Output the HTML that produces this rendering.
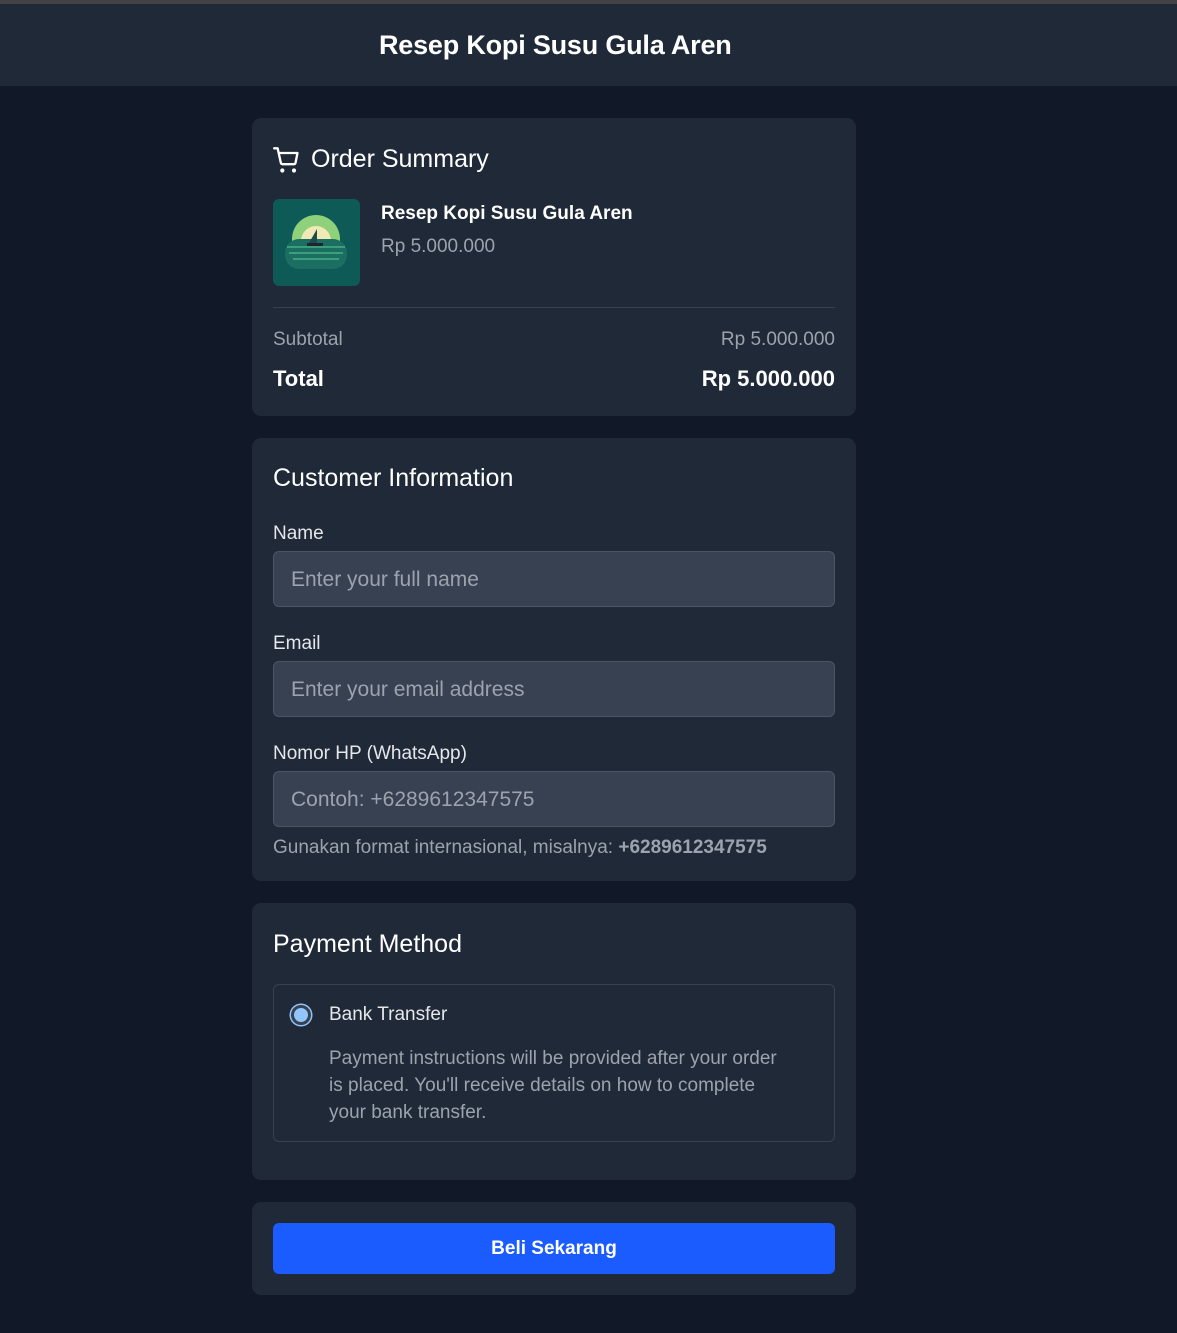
<!DOCTYPE html>
<html><head><meta charset="utf-8"><style>
*{box-sizing:border-box;margin:0;padding:0}
body{width:1177px;height:1333px;background:#111827;font-family:"Liberation Sans",Arial,sans-serif;color:#fff;position:relative;overflow:hidden}
.top{height:4px;background:#434343}
.hdr{height:82px;background:#1f2937;position:relative}
.hdr div{position:absolute;left:379px;top:26px;font-weight:bold;font-size:27px;letter-spacing:-0.2px}
.card{position:absolute;left:252px;width:604px;background:#1f2937;border-radius:9px}
.abs{position:absolute}
.lbl{position:absolute;left:21px;font-size:19px;color:#e5e7eb}
.inp{position:absolute;left:21px;width:562px;height:56px;background:#374151;border:1px solid #4b5563;border-radius:6px;font-size:21px;color:#9ca3af;padding-left:17px;line-height:56px}
</style></head><body>
<div class="top"></div>
<div class="hdr"><div>Resep Kopi Susu Gula Aren</div></div>

<div class="card" style="top:118px;height:298px">
 <svg class="abs" style="left:21px;top:28px" width="28" height="28" viewBox="0 0 24 24" fill="none" stroke="#fff" stroke-width="2" stroke-linecap="round" stroke-linejoin="round"><path d="M1 2h3l2.7 12.4a1.5 1.5 0 0 0 1.5 1.2h9.6a1.5 1.5 0 0 0 1.5-1.2L21 6H5.2"/><circle cx="8" cy="21" r="0.8" fill="#fff"/><circle cx="18" cy="21" r="0.8" fill="#fff"/></svg>
 <div class="abs" style="left:59px;top:27px;font-size:25px">Order Summary</div>
 <div class="abs" style="left:21px;top:81px;width:87px;height:87px;background:#0e5a57;border-radius:6px;overflow:hidden">
  <svg width="87" height="87" viewBox="0 0 87 87"><circle cx="43" cy="40" r="24" fill="#8fd07a"/><circle cx="43" cy="42" r="15" fill="#f0e9b5"/><rect x="12" y="40" width="62" height="30" rx="14" fill="#1c6e63"/><path d="M14 48h58M16 54h54M20 60h46" stroke="#39a07a" stroke-width="2"/><path d="M36 44l8-14v14z" fill="#1d4d4a"/><rect x="34" y="44" width="16" height="3" fill="#223"/></svg>
 </div>
 <div class="abs" style="left:129px;top:85px;font-size:19px;font-weight:bold">Resep Kopi Susu Gula Aren</div>
 <div class="abs" style="left:129px;top:118px;font-size:19px;color:#9ca3af">Rp 5.000.000</div>
 <div class="abs" style="left:21px;top:189px;width:562px;height:1px;background:#374151"></div>
 <div class="abs" style="left:21px;top:211px;font-size:19px;color:#9ca3af">Subtotal</div>
 <div class="abs" style="right:21px;top:211px;font-size:19px;color:#9ca3af">Rp 5.000.000</div>
 <div class="abs" style="left:21px;top:248px;font-size:22px;font-weight:bold">Total</div>
 <div class="abs" style="right:21px;top:248px;font-size:22px;font-weight:bold">Rp 5.000.000</div>
</div>

<div class="card" style="top:438px;height:443px">
 <div class="abs" style="left:21px;top:26px;font-size:25px">Customer Information</div>
 <div class="lbl" style="top:85px">Name</div>
 <div class="inp" style="top:113px">Enter your full name</div>
 <div class="lbl" style="top:195px">Email</div>
 <div class="inp" style="top:223px">Enter your email address</div>
 <div class="lbl" style="top:305px">Nomor HP (WhatsApp)</div>
 <div class="inp" style="top:333px">Contoh: +6289612347575</div>
 <div class="abs" style="left:21px;top:399px;font-size:19px;color:#9ca3af">Gunakan format internasional, misalnya: <b>+6289612347575</b></div>
</div>

<div class="card" style="top:903px;height:277px">
 <div class="abs" style="left:21px;top:27px;font-size:25px">Payment Method</div>
 <div class="abs" style="left:21px;top:81px;width:562px;height:158px;border:1px solid #374151;border-radius:6px">
  <div class="abs" style="left:17px;top:20px;width:20px;height:20px;border-radius:50%;background:#93c5fd;border:3px solid #374151;box-shadow:0 0 0 1.5px #93c5fd"></div>
  <div class="abs" style="left:55px;top:19px;font-size:19px;color:#e5e7eb">Bank Transfer</div>
  <div class="abs" style="left:55px;top:60px;width:455px;font-size:19px;line-height:27px;color:#9ca3af">Payment instructions will be provided after your order is placed. You'll receive details on how to complete your bank transfer.</div>
 </div>
</div>

<div class="card" style="top:1202px;height:93px">
 <div class="abs" style="left:21px;top:21px;width:562px;height:51px;background:#1a5cff;border-radius:6px;text-align:center;line-height:51px;font-size:19px;font-weight:bold">Beli Sekarang</div>
</div>
</body></html>
